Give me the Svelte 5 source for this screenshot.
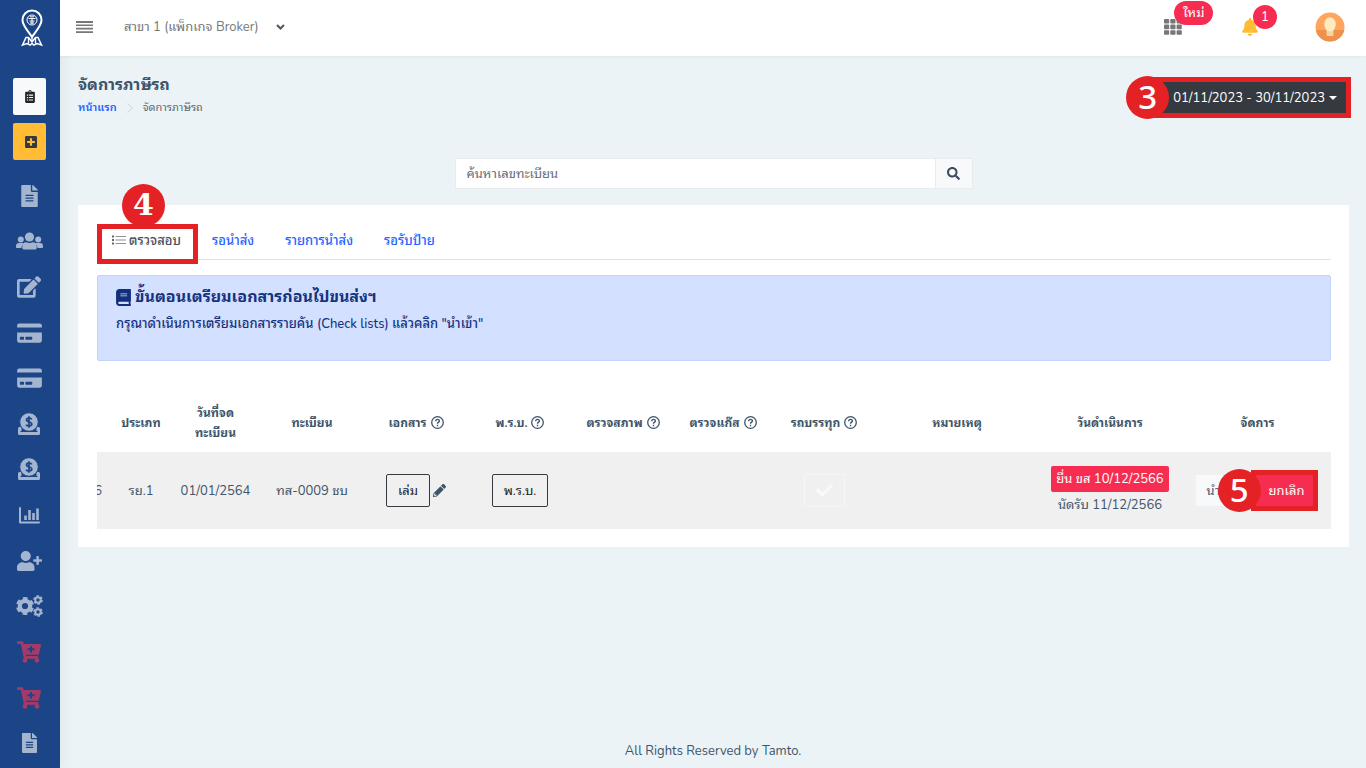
<script>
  const doc = 'M224 136V0H24C10.7 0 0 10.7 0 24v464c0 13.3 10.7 24 24 24h336c13.3 0 24-10.7 24-24V160H248c-13.2 0-24-10.8-24-24zm64 236c0 6.6-5.4 12-12 12H108c-6.6 0-12-5.4-12-12v-8c0-6.6 5.4-12 12-12h168c6.6 0 12 5.4 12 12v8zm0-64c0 6.6-5.4 12-12 12H108c-6.6 0-12-5.4-12-12v-8c0-6.6 5.4-12 12-12h168c6.6 0 12 5.4 12 12v8zm0-72v8c0 6.6-5.4 12-12 12H108c-6.6 0-12-5.4-12-12v-8c0-6.6 5.4-12 12-12h168c6.6 0 12 5.4 12 12zm96-114.1v6.1H256V0h6.1c6.4 0 12.5 2.5 17 7l97.9 98c4.5 4.5 7 10.6 7 16.9z';
  const edit = 'M402.6 83.2l90.2 90.2c3.8 3.8 3.8 10 0 13.8L274.4 405.6l-92.8 10.3c-12.4 1.4-22.9-9.1-21.5-21.5l10.3-92.8L388.8 83.2c3.8-3.8 10-3.8 13.8 0zm162-22.9l-48.8-48.8c-15.2-15.2-39.9-15.2-55.2 0l-35.4 35.4c-3.8 3.8-3.8 10 0 13.8l90.2 90.2c3.8 3.8 10 3.8 13.8 0l35.4-35.4c15.2-15.3 15.2-40 0-55.2zM384 346.2V448H64V128h229.8c3.2 0 6.2-1.3 8.5-3.5l40-40c7.6-7.6 2.2-20.5-8.5-20.5H48C21.5 64 0 85.5 0 112v352c0 26.5 21.5 48 48 48h352c26.5 0 48-21.5 48-48V306.2c0-10.7-12.9-16-20.5-8.5l-40 40c-2.2 2.3-3.5 5.3-3.5 8.5z';
  const card = 'M0 432c0 26.5 21.5 48 48 48h480c26.5 0 48-21.5 48-48V246H0v186zm192-78c0-6.600 5.400-12 12-12h136c6.600 0 12 5.400 12 12v48c0 6.600-5.400 12-12 12H204c-6.600 0-12-5.400-12-12v-48zm-128 0c0-6.600 5.400-12 12-12h72c6.600 0 12 5.400 12 12v48c0 6.600-5.400 12-12 12H76c-6.600 0-12-5.400-12-12v-48zM576 80v48H0V80c0-26.5 21.5-48 48-48h480c26.5 0 48 21.5 48 48z';
  const userPlus = 'M624 208h-64v-64c0-8.8-7.2-16-16-16h-32c-8.8 0-16 7.2-16 16v64h-64c-8.8 0-16 7.2-16 16v32c0 8.8 7.2 16 16 16h64v64c0 8.8 7.2 16 16 16h32c8.8 0 16-7.2 16-16v-64h64c8.8 0 16-7.2 16-16v-32c0-8.8-7.2-16-16-16zm-400 48c70.7 0 128-57.3 128-128S294.7 0 224 0 96 57.3 96 128s57.3 128 128 128zm89.6 32h-16.7c-22.2 10.2-46.9 16-72.9 16s-50.6-5.8-72.9-16h-16.7C60.2 288 0 348.2 0 422.4V464c0 26.5 21.5 48 48 48h352c26.5 0 48-21.5 48-48v-41.6c0-74.2-60.2-134.4-134.4-134.4z';
  const cart = 'M504.717 320H211.572l6.545 32h268.418c15.401 0 26.816 14.301 23.403 29.319l-5.517 24.276C523.112 414.668 536 433.828 536 456c0 31.202-25.519 56.444-56.824 55.994-29.823-.429-54.35-24.631-55.155-54.447-.44-16.287 6.085-31.049 16.803-41.548H231.176C241.553 426.165 248 440.326 248 456c0 31.813-26.528 57.431-58.67 55.938-28.54-1.325-51.751-24.385-53.251-52.917-1.158-22.034 10.436-41.455 28.051-51.586L93.883 64H24C10.745 64 0 53.255 0 40V24C0 10.745 10.745 0 24 0h102.529c11.401 0 21.228 8.021 23.513 19.19L159.208 64H551.99c15.401 0 26.816 14.301 23.403 29.319l-47.273 208C525.637 312.246 515.923 320 504.717 320zM408 168h-48v-40c0-8.837-7.163-16-16-16h-16c-8.837 0-16 7.163-16 16v40h-48c-8.837 0-16 7.163-16 16v16c0 8.837 7.163 16 16 16h48v40c0 8.837 7.163 16 16 16h16c8.837 0 16-7.163 16-16v-40h48c8.837 0 16-7.163 16-16v-16c0-8.837-7.163-16-16-16z';
  const pencil = 'M497.9 142.1l-46.1 46.1c-4.7 4.7-12.3 4.7-17 0l-111-111c-4.7-4.7-4.7-12.3 0-17l46.1-46.1c18.7-18.7 49.1-18.7 67.9 0l60.1 60.1c18.8 18.7 18.8 49.1 0 67.9zM284.2 99.8L21.6 362.4.4 483.9c-2.9 16.4 11.4 30.6 27.8 27.8l121.5-21.3 262.6-262.6c4.7-4.7 4.7-12.3 0-17l-111-111c-4.8-4.7-12.4-4.7-17.1 0zM88 424h48v36.3l-64.5 11.3-31.1-31.1L51.7 376H88v48z';
  const menu = [
    { box: '0 0 384 512', w: 17, h: 22, d: doc },
    { kind: 'users' },
    { box: '0 0 576 512', w: 24, h: 22, d: edit },
    { box: '0 0 576 512', w: 25, h: 22, d: card },
    { box: '0 0 576 512', w: 25, h: 22, d: card },
    { kind: 'donate' },
    { kind: 'donate' },
    { kind: 'chart' },
    { box: '0 0 640 512', w: 27, h: 20, d: userPlus },
    { kind: 'cogs' },
    { box: '0 0 576 512', w: 24, h: 22, d: cart, hot: true },
    { box: '0 0 576 512', w: 24, h: 22, d: cart, hot: true },
    { box: '0 0 384 512', w: 17, h: 20, d: doc }
  ];
  const widths = [16, 56, 93, 100, 108, 100, 106, 94, 108, 158, 148, 147];
  const total = widths.reduce((a, b) => a + b, 0);
  const heads = [
    ['ประเภท'], ['วันที่จดทะเบียน'], ['ทะเบียน'], ['เอกสาร', true], ['พ.ร.บ.', true], ['ตรวจสภาพ', true],
    ['ตรวจแก๊ส', true], ['รถบรรทุก', true], ['หมายเหตุ'], ['วันดำเนินการ'], ['จัดการ']
  ];
  const cells = [0, 1, 2];
</script>

<div class="app">
  <aside>
    <a class="logo" href="#home" aria-label="Tamto">
      <svg width="22" height="38" viewBox="0 0 22 38" fill="none" stroke="#fff">
        <path d="M11 28C8 23 1.500 17 1.500 11a9.500 9.500 0 0 1 19 0c0 6-6.500 12-9.500 17z" stroke-width="2" />
        <circle cx="11" cy="11" r="5" stroke-width="1" />
        <path d="M7.500 9.500h7M8.500 12h5M11 9.500V15M9 7.800h4M9 14h4" stroke-width="1" />
        <path d="M5 28.500h2.500L11 33l3.500-4.500H17L20.500 36l-4.500-1.500L12.800 36 11 34.500 9.200 36 6 34.500 1.500 36z" stroke-width="1.500" />
        <path d="M7.500 29v5.500M14.500 29v5.500M11 28v4" stroke-width="1.300" />
      </svg>
    </a>
    <div class="quick">
      <button class="light" aria-label="Clipboard">
        <svg width="10" height="13" viewBox="0 0 384 512"><path fill-rule="evenodd" fill="#212529" d="M336 64h-80a64 64 0 0 0-128 0H48C21 64 0 85 0 112v352c0 27 21 48 48 48h288c27 0 48-21 48-48V112c0-27-21-48-48-48zM192 40a24 24 0 1 1 0 48 24 24 0 0 1 0-48zM70 180h50v46H70zM155 180h160v42H155zM70 275h50v46H70zM155 275h160v42H155zM70 370h50v46H70zM155 370h160v42H155z" /></svg>
      </button>
      <button class="amber" aria-label="Add">
        <svg width="12" height="14" viewBox="0 0 448 512"><path fill="#343a40" d="M400 32H48C21.500 32 0 53.500 0 80v352c0 26.500 21.500 48 48 48h352c26.500 0 48-21.500 48-48V80c0-26.500-21.500-48-48-48zm-32 252c0 6.600-5.400 12-12 12h-92v92c0 6.600-5.400 12-12 12h-56c-6.600 0-12-5.400-12-12v-92H92c-6.600 0-12-5.400-12-12v-56c0-6.600 5.400-12 12-12h92v-92c0-6.600 5.400-12 12-12h56c6.600 0 12 5.400 12 12v92h92c6.600 0 12 5.400 12 12v56z" /></svg>
      </button>
    </div>
    <nav>
      {#each menu as m, i}
        <a href="#menu-{i}" class:hot={m.hot} aria-label="Menu {i + 1}">
          {#if m.kind === 'donate'}
            <svg width="22" height="22" viewBox="0 0 22 22">
              <path fill="currentColor" d="M1.500 14h2v4h15v-4h2a1.500 1.500 0 0 1 1.500 1.500v5a1.500 1.500 0 0 1-1.500 1.500h-19A1.500 1.500 0 0 1 0 20.500v-5A1.500 1.500 0 0 1 1.500 14z" />
              <circle cx="11" cy="9" r="9.300" fill="#a4b5cf" stroke="#1c4587" stroke-width="1" />
              <path d="M13.800 6.300C13 4.800 8.500 4.600 8.500 7c0 2.500 5.300 1.400 5.300 4 0 2.500-5 2.300-5.600.6M11 3.300v11.400" fill="none" stroke="#1c4587" stroke-width="1.700" />
              <path d="M2.500 18.500h17" stroke="#1c4587" stroke-width="1" />
            </svg>
          {:else if m.kind === 'users'}
            <svg width="27" height="18" viewBox="0 0 27 18" fill="currentColor">
              <circle cx="4.800" cy="7.500" r="3" /><circle cx="22.200" cy="7.500" r="3" />
              <path d="M3 11h3.500l1.500.8c-1.700 1-2.300 2.200-2.500 4.200H1c-.6 0-1-.4-1-1v-1a3 3 0 0 1 3-3zM24 11h-3.500l-1.500.8c1.700 1 2.300 2.200 2.500 4.200H26c.6 0 1-.4 1-1v-1a3 3 0 0 0-3-3z" />
              <circle cx="13.500" cy="5" r="4.600" />
              <path d="M10 10.200c2.200 1 4.800 1 7 0a4 4 0 0 1 3.700 4v1.500c0 1.200-.8 1.800-1.700 1.800H8c-1 0-1.700-.6-1.700-1.800v-1.500a4 4 0 0 1 3.700-4z" />
            </svg>
          {:else if m.kind === 'chart'}
            <svg width="21" height="17" viewBox="0 0 21 17" fill="none" stroke="currentColor">
              <path d="M1 1V15.500h19" stroke-width="2" stroke-linejoin="round" stroke-linecap="round" />
              <path d="M6.500 8.500V13M10.500 3v10M14.500 6v7M18.500 1.500V13" stroke-width="2.600" />
            </svg>
          {:else if m.kind === 'cogs'}
            <svg width="27" height="22" viewBox="0 0 27 22" fill="none" stroke="currentColor">
              <circle cx="9" cy="11" r="5.200" stroke-width="4.200" />
              <circle cx="9" cy="11" r="7.700" stroke-width="2.600" stroke-dasharray="4.600 3.464" stroke-dashoffset="-1.730" />
              <circle cx="22" cy="5" r="2.700" stroke-width="2" />
              <circle cx="22" cy="5" r="4" stroke-width="1.600" stroke-dasharray="2.400 1.789" />
              <circle cx="22" cy="17" r="2.700" stroke-width="2" />
              <circle cx="22" cy="17" r="4" stroke-width="1.600" stroke-dasharray="2.400 1.789" />
            </svg>
          {:else}
            <svg width={m.w} height={m.h} viewBox={m.box}><path fill="currentColor" d={m.d} /></svg>
          {/if}
        </a>
      {/each}
    </nav>
  </aside>

  <div class="page">
    <header>
      <button class="plain burger" aria-label="Toggle menu">
        <svg width="17" height="12" viewBox="0 0 17 12" fill="#777"><path d="M0 0h17v2H0zM0 3.400h17v1.600H0zM0 6.800h17v1.600H0zM0 10.200h17V12H0z" /></svg>
      </button>
      <button class="plain branch">
        สาขา 1 (แพ็กเกจ Broker)
        <svg width="9" height="6" viewBox="0 0 9 6" fill="none" stroke="#555" stroke-width="2"><path d="M1 1l3.500 3.500L8 1" /></svg>
      </button>
      <div class="tools">
        <button class="plain tool apps" aria-label="Apps">
          <svg width="18" height="16" viewBox="0 0 18 16" fill="#777">
            {#each cells as r}{#each cells as c}<rect x={c * 6.3} y={r * 5.6} width="5.200" height="4.600" rx=".8" />{/each}{/each}
          </svg>
          <span class="badge">ใหม่</span>
        </button>
        <button class="plain tool bell" aria-label="Notifications">
          <svg width="16" height="18" viewBox="0 0 448 512"><path fill="#ffbc34" d="M224 512c35.320 0 63.970-28.650 63.970-64H160.030c0 35.350 28.650 64 63.970 64zm215.390-149.710c-19.320-20.760-55.470-51.990-55.470-154.290 0-77.700-54.480-139.900-127.940-155.160V32c0-17.670-14.320-32-31.980-32s-31.980 14.330-31.980 32v20.840C118.560 68.100 64.080 130.300 64.080 208c0 102.300-36.150 133.530-55.470 154.290-6 6.450-8.660 14.160-8.610 21.710.11 16.400 12.980 32 32.100 32h383.800c19.120 0 32-15.600 32.100-32 .05-7.550-2.610-15.270-8.610-21.710z" /></svg>
          <span class="badge">1</span>
        </button>
        <button class="plain" aria-label="Profile">
          <svg width="30" height="30" viewBox="0 0 30 30">
            <circle cx="15" cy="15" r="14.500" fill="#ffa55d" />
            <path d="M.8 18h28.400A14.500 14.500 0 0 1 .8 18z" fill="#ee914b" />
            <path d="M11.500 18h7v4.500c0 1-.8 1.500-1.500 1.500h-4c-.7 0-1.500-.5-1.500-1.500z" fill="#f3d3a1" />
            <path d="M15 5.500c3.300 0 5.700 2.600 5.700 6.500 0 4-2.200 7.500-5.700 7.500S9.300 16 9.300 12c0-3.900 2.400-6.500 5.700-6.500z" fill="#ffeac2" />
          </svg>
        </button>
      </div>
    </header>

    <main>
      <div class="top">
        <div>
          <h1>จัดการภาษีรถ</h1>
          <div class="crumbs">
            <a href="#home">หน้าแรก</a>
            <svg width="6" height="10" viewBox="0 0 6 10" fill="none" stroke="#ccd3da"><path d="M.5.5 5.500 5l-5 4.500" /></svg>
            <span>จัดการภาษีรถ</span>
          </div>
        </div>
        <div class="range marked">
          <button>01/11/2023 - 30/11/2023 <i></i></button>
          <b class="num">3</b>
        </div>
      </div>

      <form class="search">
        <input type="text" aria-label="ค้นหาเลขทะเบียน" placeholder="ค้นหาเลขทะเบียน" />
        <button type="button" aria-label="ค้นหา">
          <svg width="13" height="13" viewBox="0 0 512 512"><path fill="#3f4a61" d="M505 442.700L405.300 343c-4.500-4.500-10.600-7-17-7H372c27.600-35.300 44-79.700 44-128C416 93.100 322.900 0 208 0S0 93.100 0 208s93.100 208 208 208c48.300 0 92.700-16.400 128-44v16.300c0 6.400 2.500 12.500 7 17l99.700 99.700c9.400 9.400 24.600 9.400 33.900 0l28.300-28.300c9.400-9.400 9.400-24.600.1-34zM208 336c-70.700 0-128-57.200-128-128 0-70.700 57.200-128 128-128 70.700 0 128 57.200 128 128 0 70.700-57.200 128-128 128z" /></svg>
        </button>
      </form>

      <section class="card">
        <div class="tabs">
          <a class="tab active marked" href="#check">
            <svg width="14" height="10" viewBox="0 0 14 10" stroke="#60656d"><path d="M0 1.500h2M0 5h2M0 8.500h2" stroke-width="2" /><path d="M3.500 1.500H14M3.500 5H14M3.500 8.500H14" stroke="#8d9198" /></svg>
            ตรวจสอบ
            <b class="num">4</b>
          </a>
          <a class="tab" href="#waiting">รอนำส่ง</a>
          <a class="tab" href="#sent">รายการนำส่ง</a>
          <a class="tab" href="#plates">รอรับป้าย</a>
        </div>

        <div class="alert">
          <h2>
            <svg width="15" height="17" viewBox="0 0 448 512"><path fill="#12307d" fill-rule="evenodd" d="M448 360V24c0-13-11-24-24-24H96C43 0 0 43 0 96v320c0 53 43 96 96 96h328c13 0 24-11 24-24v-16c0-8-4-14-9-19-4-15-4-59 0-74 5-4 9-11 9-19zM128 134h206v22H128zm0 64h206v22H128zm253 250H96a32 32 0 0 1 0-64h285c-2 17-2 47 0 64z" /></svg>
            ขั้นตอนเตรียมเอกสารก่อนไปขนส่งฯ
          </h2>
          <p>กรุณาดำเนินการเตรียมเอกสารรายคัน (Check lists) แล้วคลิก "นำเข้า"</p>
        </div>

        <table>
          <colgroup>
            {#each widths as w}<col style="width:{(w / total) * 100}%" />{/each}
          </colgroup>
          <thead>
            <tr>
              <th></th>
              {#each heads as [label, help]}
                <th>{label}{#if help}<svg class="help" width="13" height="13" viewBox="0 0 13 13" fill="none" stroke="currentColor"><circle cx="6.500" cy="6.500" r="5.800" stroke-width="1.300" /><path d="M4.700 5.200c0-2.500 3.700-2.300 3.700-.3 0 1.300-1.900 1.300-1.900 2.800M6.500 8.700v1.500" stroke-width="1.400" /></svg>{/if}</th>
              {/each}
            </tr>
          </thead>
          <tbody>
            <tr>
              <td><div class="cut">6</div></td>
              <td>รย.1</td>
              <td>01/01/2564</td>
              <td>ทส-0009 ชบ</td>
              <td>
                <div class="pair">
                  <button class="outline">เล่ม</button>
                  <svg width="13" height="13" viewBox="0 0 512 512"><path fill="#3e5569" d={pencil} /></svg>
                </div>
              </td>
              <td><button class="outline">พ.ร.บ.</button></td>
              <td></td>
              <td></td>
              <td>
                <button class="outline ghost" aria-label="รถบรรทุก">
                  <svg width="17" height="17" viewBox="0 0 512 512"><path fill="#f8f9fa" d="M173.898 439.404l-166.400-166.400c-9.997-9.997-9.997-26.206 0-36.204l36.203-36.204c9.997-9.998 26.207-9.998 36.204 0L192 312.690 432.095 72.596c9.997-9.997 26.207-9.997 36.204 0l36.203 36.204c9.997 9.997 9.997 26.206 0 36.204l-294.400 294.401c-9.998 9.997-26.207 9.997-36.204-.001z" /></svg>
                </button>
              </td>
              <td></td>
              <td>
                <span class="due">ยื่น ขส 10/12/2566</span>
                <div class="pickup">นัดรับ 11/12/2566</div>
              </td>
              <td>
                <div class="actions">
                  <button class="import">นำเข้า</button>
                  <div class="cancel marked">
                    <button>ยกเลิก</button>
                    <b class="num">5</b>
                  </div>
                </div>
              </td>
            </tr>
          </tbody>
        </table>
      </section>
    </main>
    <footer>All Rights Reserved by Tamto.</footer>
  </div>
</div>

<style>
  :global(body) { margin: 0; }
  .app, .app * { box-sizing: border-box; }
  .app {
    display: flex;
    min-height: 100vh;
    background: #ebf3f7;
    color: #3e5569;
    font-family: "Nunito", "Noto Sans Thai Looped", "Loma", "Laksaman", "Garuda", "Waree", "Noto Sans Thai", "Noto Sans", sans-serif;
    font-size: 13px;
    line-height: 20px;
  }
  button, input { font: inherit; color: inherit; margin: 0; }
  button { cursor: pointer; }
  a { text-decoration: none; color: #2962ff; }
  svg { flex: none; display: block; }
  .plain { background: none; border: 0; padding: 0; }

  aside {
    position: relative;
    z-index: 1;
    flex: none;
    width: 60px;
    display: flex;
    flex-direction: column;
    background: #1c4587;
    box-shadow: 1px 0 16px rgba(0, 0, 0, .07);
    padding-bottom: 2px;
  }
  .logo { height: 56px; display: flex; justify-content: center; align-items: center; padding-left: 4px; }
  .quick { display: flex; flex-direction: column; gap: 8px; padding: 22px 14px 13px 13px; }
  .quick button { height: 37px; border: 0; border-radius: 2px; display: flex; align-items: center; justify-content: center; padding: 0; }
  .quick .light { background: #f8f9fa; }
  .quick .amber { background: #ffbc34; padding-left: 3px; }
  nav { flex: 1; display: flex; flex-direction: column; padding-right: 2px; }
  nav a { flex: 1; display: flex; align-items: center; justify-content: center; color: #a4b5cf; }
  nav a.hot { color: #a53a69; }

  .page { flex: 1; min-width: 0; display: flex; flex-direction: column; }
  header {
    position: relative;
    z-index: 2;
    height: 56px;
    background: #fff;
    display: flex;
    align-items: center;
    padding: 0 21px 3px 16px;
    box-shadow: 0 1px 3px rgba(0, 0, 0, .05);
  }
  .branch { margin-left: 31px; display: flex; align-items: center; gap: 17px; color: #777; }
  .tools { margin-left: auto; display: flex; align-items: center; }
  .tool { position: relative; }
  .apps { margin-right: 60px; }
  .bell { margin-right: 57px; }
  .badge {
    position: absolute;
    left: 10px;
    bottom: 10px;
    background: #f62d51;
    color: #fff;
    border-radius: 12px;
    height: 24px;
    line-height: 24px;
    padding: 0 9px;
  }
  .bell .badge { left: 11px; bottom: 7px; padding: 0 8px; }

  main { padding: 17px 17px 0 18px; }
  .top { display: flex; justify-content: space-between; align-items: flex-start; }
  h1 { margin: 0; font-size: 16px; line-height: 24px; font-weight: 700; }
  .crumbs { display: flex; align-items: center; gap: 10px; font-size: 11px; line-height: 22px; color: #5f6b78; }
  .crumbs a { font-weight: 600; }

  .marked { position: relative; }
  .marked::after { content: ""; position: absolute; border: 5px solid #e42226; pointer-events: none; }
  .num {
    position: absolute;
    z-index: 2;
    width: 43px;
    height: 43px;
    border-radius: 50%;
    background: #e42226;
    color: #fff;
    font: 500 33px/42px "Noto Sans", sans-serif;
    text-align: center;
  }
  .range { margin: 9px 3px 0 0; }
  .range button { height: 31px; border: 0; background: #343a40; color: #fff; padding: 0 9px 0 12px; display: flex; align-items: center; gap: 4px; }
  .range i { border: 4px solid transparent; border-top-color: #fff; border-bottom: 0; }
  .range::after { inset: -5px -5px -5px -14px; }
  .range .num { left: -35px; top: -6px; }

  .search { display: flex; max-width: 518px; margin: 39px auto 16px; height: 31px; }
  .search input { flex: 1; min-width: 0; border: 1px solid #e9ecef; background: #fff; padding: 0 11px; outline: 0; }
  .search input::placeholder { color: #5f6d7b; opacity: 1; }
  .search button { width: 37px; border: 1px solid #e9ecef; border-left: 0; background: #f8f9fa; display: flex; align-items: center; justify-content: center; padding: 0; }

  .card { background: #fff; padding: 18px 18px 18px 19px; }
  .tabs { display: flex; border-bottom: 1px solid #dee2e6; height: 37px; }
  .tab { padding: 8px 16px 8px 15px; font-weight: 500; white-space: nowrap; display: flex; align-items: flex-start; }
  .tab.active { color: #495057; gap: 3px; }
  .tab.active svg { margin-top: 4px; }
  .tab.active::after { inset: 1px -1px -5px 0; }
  .tab .num { left: 25px; top: -39px; font-family: "DejaVu Serif", serif; font-weight: 700; font-size: 30px; }

  .alert { margin-top: 15px; min-height: 86px; background: #d4e0ff; border: 1px solid #c3d3ff; border-radius: 2px; padding: 9px 18px; color: #15337f; }
  .alert h2 { margin: 0; font-size: 16px; line-height: 24px; font-weight: 700; display: flex; align-items: center; gap: 4px; }
  .alert p { margin: 5px 0 0; font-weight: 500; }

  table { width: 100%; margin-top: 32px; table-layout: fixed; border-collapse: collapse; text-align: center; }
  th { height: 59px; padding: 0 8px; font-weight: 700; font-size: 12px; line-height: 20px; white-space: nowrap; }
  th:nth-child(3) { padding: 0 20px; white-space: normal; }
  .help { display: inline-block; vertical-align: -2px; margin-left: 4px; }
  td { height: 77px; padding: 0; background: #f0f0f0; white-space: nowrap; }
  .cut { display: flex; justify-content: flex-end; overflow: hidden; padding-right: 11px; width: 16px; }
  .pair { display: flex; align-items: center; justify-content: center; gap: 3px; }
  .outline { height: 33px; padding: 0 11px; border: 1px solid #343a40; border-radius: 2px; background: none; color: #212529; }
  .ghost { border-color: #f5f6f7; display: inline-flex; align-items: center; vertical-align: middle; }
  .due { display: inline-block; background: #f62d51; color: #fff; border-radius: 2px; padding: 3px 5px; }
  .pickup { margin-top: 3px; }
  .actions { display: flex; justify-content: center; padding-right: 6px; }
  .import { height: 31px; border: 0; background: #f8f9fa; padding: 0 11px; width: 60px; text-align: left; }
  .cancel button { height: 31px; border: 0; background: #f62d51; color: #fff; padding: 0 9px 0 13px; }
  .cancel::after { inset: -5px; }
  .cancel .num { left: -38px; top: -6px; }

  footer { margin-top: auto; text-align: center; line-height: 20px; padding-bottom: 7px; }
</style>
